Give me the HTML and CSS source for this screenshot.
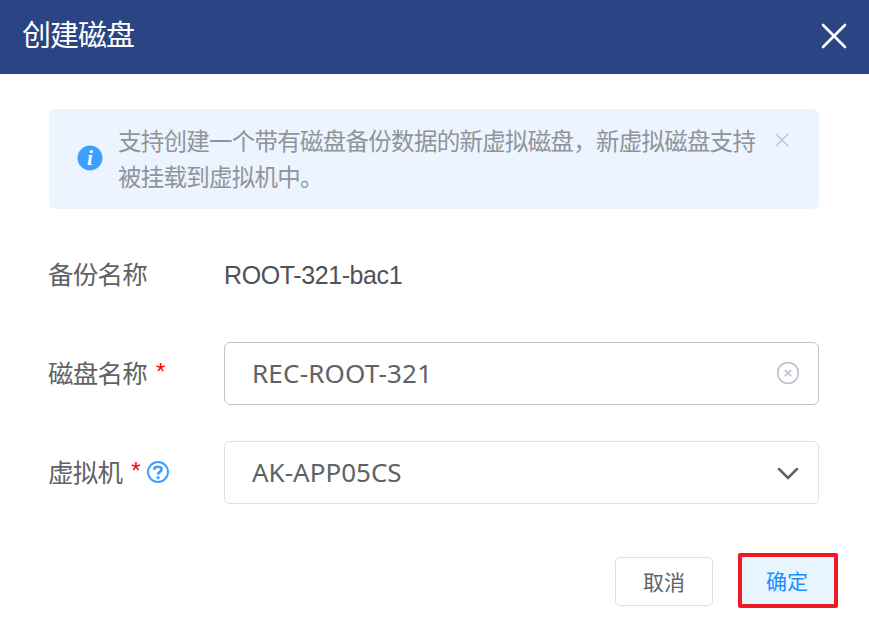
FILE: index.html
```html
<!DOCTYPE html>
<html lang="zh-CN">
<head>
<meta charset="utf-8">
<title>创建磁盘</title>
<link rel="stylesheet" href="styles.css">
</head>
<body>
<main class="dialog">
  <header class="header">
    <h1 class="title">创建磁盘</h1>
    <svg class="close" viewBox="0 0 26 26"><path d="M2 2 24 24M24 2 2 24"/></svg>
  </header>
  <section class="alert">
    <svg class="alert-icon" viewBox="0 0 26 26"><circle cx="13" cy="13" r="12.5"/><text x="13" y="20">i</text></svg>
    <p class="alert-text">支持创建一个带有磁盘备份数据的新虚拟磁盘，新虚拟磁盘支持<br>被挂载到虚拟机中。</p>
    <svg class="alert-close" viewBox="0 0 14 14"><path d="M.7 .7 13.3 13.3M13.3 .7 .7 13.3"/></svg>
  </section>
  <form class="form">
    <div class="row">
      <span class="label">备份名称</span>
      <span class="static">ROOT-321-bac1</span>
    </div>
    <div class="row">
      <span class="label">磁盘名称<i class="star">*</i></span>
      <div class="field field-active"><span class="value value-name">REC-ROOT-321</span>
        <svg class="clear" viewBox="0 0 24 24"><circle cx="12" cy="12" r="10.3"/><path d="M8.8 8.8 15.2 15.2M15.2 8.8 8.8 15.2"/></svg>
      </div>
    </div>
    <div class="row">
      <span class="label">虚拟机<i class="star">*</i><svg class="help" viewBox="0 0 24 24"><circle cx="12" cy="12" r="10"/><path class="hook" d="M8.2 9.7C8.4 5.8 15.6 5.8 15.6 9.4 15.6 11.9 12 11.7 12 14.6"/><circle class="dot" cx="12" cy="17.6" r="1.7"/></svg></span>
      <div class="field"><span class="value">AK-APP05CS</span>
        <svg class="arrow" viewBox="0 0 24 24"><path d="M3 8 12 17 21 8"/></svg>
      </div>
    </div>
  </form>
  <footer class="footer">
    <button class="button button-cancel">取消</button>
    <button class="button button-primary">确定</button>
  </footer>
</main>
</body>
</html>
```

FILE: styles.css
```css
* { box-sizing: border-box; }
body { margin: 0; background: #fff; color: #606266; font-family: "Noto Sans", "Noto Sans CJK SC", sans-serif; }
.dialog { width: 869px; height: 635px; }
.header { height: 74px; padding: 0 22px 2px 22px; background: #2a4484; color: #fff; display: flex; align-items: center; justify-content: space-between; }
.title { margin: 0; padding-bottom: 7px; font: 400 29px/40px "Noto Sans CJK SC", sans-serif; letter-spacing: -1px; }
.close { width: 26px; height: 26px; fill: none; stroke: #fff; stroke-width: 2.6; stroke-linecap: round; }
.alert { display: flex; height: 100px; margin: 35px 50px 0 49px; padding: 13px 30px 0 28px; border-radius: 6px; background: #ecf4ff; }
.alert-icon { width: 26px; height: 26px; margin: 23px 15px 0 0; fill: #409eff; flex: none; }
.alert-icon text { fill: #fff; font: italic bold 21px "Liberation Serif", serif; text-anchor: middle; }
.alert-text { margin: 0; width: 643px; font: 400 23.5px/36px "Noto Sans CJK SC", sans-serif; letter-spacing: -.74px; color: #909399; white-space: nowrap; }
.alert-close { width: 14px; height: 14px; margin: 11px 0 0 14px; fill: none; stroke: #c0c4cc; stroke-width: 1.5; flex: none; }
.form { margin: 34px 50px 0 48px; display: flex; flex-direction: column; gap: 36px; }
.row { display: flex; height: 63px; align-items: center; }
.label { width: 176px; padding-bottom: 3px; display: flex; align-items: center; font: 400 25.5px/36px "Noto Sans CJK SC", sans-serif; letter-spacing: -.75px; flex: none; white-space: nowrap; }
.static { font: 400 25px/36px "Liberation Sans", sans-serif; letter-spacing: -.4px; color: #505256; }
.star { color: #f00; font: normal 24px/36px "Liberation Sans", sans-serif; margin-left: 9px; }
.help { width: 24px; height: 24px; margin: 2px 0 0 6px; fill: none; stroke: #409eff; stroke-width: 2; }
.help .hook { stroke-width: 2.7; }
.help .dot { fill: #409eff; stroke: none; }
.field { flex: 1; height: 63px; display: flex; align-items: center; justify-content: space-between; padding: 0 18px 0 27px; border: 1px solid #dcdfe6; border-radius: 6px; }
.field-active { border-color: #c0c4cc; }
.value { font-size: 26px; line-height: 36px; padding-bottom: 1px; }
.value-name { letter-spacing: .2px; }
.clear, .arrow { width: 24px; height: 24px; fill: none; stroke: #c0c4cc; stroke-width: 1.7; }
.clear { margin-bottom: 2px; }
.arrow { stroke: #606266; stroke-width: 2.5; stroke-linecap: round; }
.footer { display: flex; justify-content: flex-end; align-items: center; gap: 25px; padding-right: 31px; margin-top: 49px; }
.button { width: 98px; height: 49px; padding: 0 0 2px; border: 1px solid #dcdfe6; border-radius: 5px; background: #fff; color: #606266; font: 400 21px/30px "Noto Sans CJK SC", sans-serif; }
.button-cancel { margin-top: 2px; }
.button-primary { width: 100px; height: 55px; padding: 0 2px 1px 0; border: 4px solid #ed1c24; border-radius: 2px; background: #e8f4ff; color: #1890ff; }
```
